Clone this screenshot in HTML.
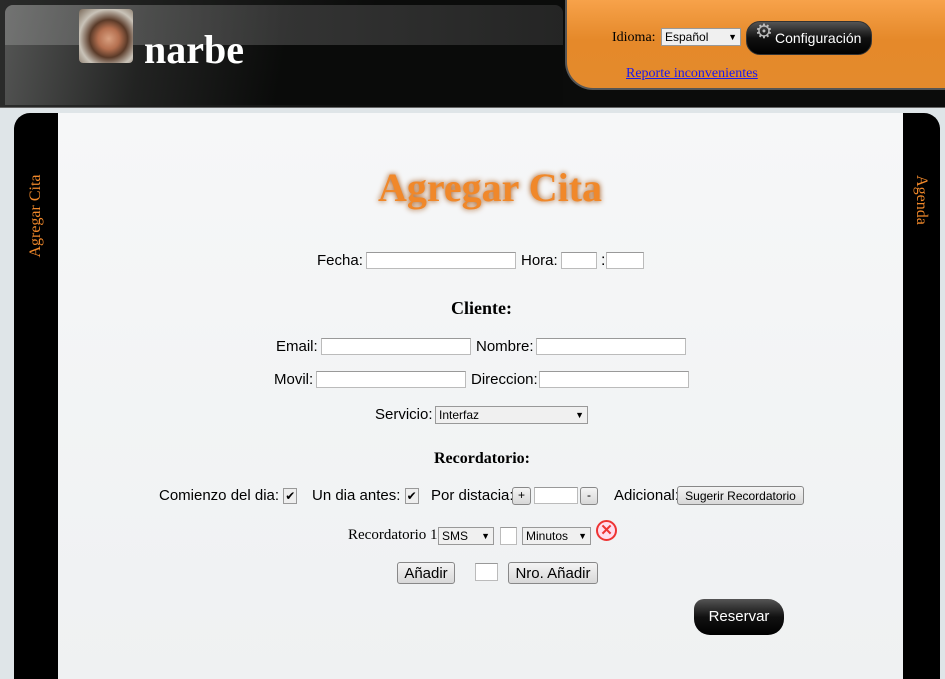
<!DOCTYPE html>
<html><head><meta charset="utf-8"><style>
*{box-sizing:border-box}
body{margin:0;width:945px;height:679px;overflow:hidden;background:#dfe5e8;font-family:"Liberation Sans",sans-serif;position:relative}
.a{position:absolute}
#hdr{left:0;top:0;width:945px;height:108px;background:linear-gradient(90deg,#2a2b2a,#0b0c0b 40%,#0b0c0b);border-bottom:1px solid #666}
#hl{left:5px;top:5px;width:558px;height:100px;border-radius:8px 8px 0 0;background:linear-gradient(100deg,#555655 0%,#222322 25%,#0a0b0a 50%);}
#hlband{left:5px;top:5px;width:558px;height:40px;border-radius:8px 8px 0 0;background:linear-gradient(90deg,#8a8b8a,#555 50%,#3a3a3a);opacity:.55}
#av{left:79px;top:9px;width:54px;height:54px;border-radius:4px;background:radial-gradient(circle at 55% 55%,#d8a080 0,#b57050 25%,#5a3a28 45%,#c9c3b8 70%,#7a6a5a)}
#nm{left:144px;top:26px;font:bold 40px "Liberation Serif",serif;color:#fff}
#or{left:565px;top:0;width:380px;height:90px;border-radius:0 0 0 28px;background:linear-gradient(#f7a24a,#e5892a 45%,#e48a2c);border:2px solid #555;border-top:none;border-right:none}
.sel{background:#f0f0f0;border:1px solid #999;font-size:12px;color:#000;padding:1px 3px;display:flex;justify-content:space-between;align-items:center}
.btn{background:linear-gradient(#f4f4f4,#d8d8d8);border:1px solid #888;border-radius:3px;font-size:13px;color:#000;text-align:center}
.inp{background:#fff;border:1px solid #bbb;border-top-color:#999}
#cont{left:58px;top:113px;width:845px;height:566px;background:linear-gradient(#f6f7f8,#eff1f2)}
.side{background:#000;color:#f0882a;font:16px "Liberation Serif",serif}
.l{font-size:15px;color:#000}
</style></head><body>
<div id="hdr" class="a"></div>
<div id="hl" class="a"></div>
<div id="hlband" class="a"></div>
<div id="av" class="a"></div>
<div id="nm" class="a">narbe</div>
<div id="or" class="a"></div>
<div class="a" style="left:612px;top:30px;font:14px 'Liberation Serif',serif">Idioma:</div>
<div class="a sel" style="left:661px;top:28px;width:80px;height:18px"><span>Español</span><span style="font-size:9px">▼</span></div>
<div class="a" style="left:746px;top:21px;width:126px;height:34px;border-radius:14px;background:linear-gradient(#555,#111 50%,#000);border:1px solid #333;color:#fff;font-size:14px;padding:8px 0 0 28px">Configuración</div>
<div class="a" style="left:755px;top:22px;color:#bbb;font-size:20px;line-height:20px">⚙</div>
<div class="a" style="left:626px;top:66px;font:14px 'Liberation Serif',serif;color:#1a1aee;text-decoration:underline">Reporte inconvenientes</div>

<div class="a side" style="left:14px;top:113px;width:44px;height:566px;border-radius:16px 0 0 0"></div>
<div class="a" style="left:14px;top:113px;width:44px;height:200px;"><div style="position:absolute;left:-58px;top:94px;width:160px;transform:rotate(-90deg);text-align:center;color:#f0882a;font:16px 'Liberation Serif',serif">Agregar Cita</div></div>
<div class="a side" style="left:903px;top:113px;width:37px;height:566px;border-radius:0 16px 0 0"></div>
<div class="a" style="left:903px;top:113px;width:37px;height:180px;"><div style="position:absolute;left:-62px;top:78px;width:160px;transform:rotate(90deg);text-align:center;color:#f0882a;font:16px 'Liberation Serif',serif">Agenda</div></div>
<div id="cont" class="a"></div>

<div class="a" style="left:378px;top:164px;font:bold 40px 'Liberation Serif',serif;color:#f0882a;text-shadow:0 0 6px #a05010">Agregar Cita</div>

<div class="a l" style="left:317px;top:252px">Fecha:</div>
<div class="a inp" style="left:366px;top:252px;width:150px;height:17px"></div>
<div class="a l" style="left:521px;top:252px">Hora:</div>
<div class="a inp" style="left:561px;top:252px;width:36px;height:17px"></div>
<div class="a" style="left:601px;top:252px">:</div>
<div class="a inp" style="left:606px;top:252px;width:38px;height:17px"></div>

<div class="a" style="left:451px;top:298px;font:bold 18px 'Liberation Serif',serif">Cliente:</div>
<div class="a l" style="left:276px;top:338px">Email:</div>
<div class="a inp" style="left:321px;top:338px;width:150px;height:17px"></div>
<div class="a l" style="left:476px;top:338px">Nombre:</div>
<div class="a inp" style="left:536px;top:338px;width:150px;height:17px"></div>
<div class="a l" style="left:274px;top:371px">Movil:</div>
<div class="a inp" style="left:316px;top:371px;width:150px;height:17px"></div>
<div class="a l" style="left:471px;top:371px">Direccion:</div>
<div class="a inp" style="left:539px;top:371px;width:150px;height:17px"></div>
<div class="a l" style="left:375px;top:406px">Servicio:</div>
<div class="a sel" style="left:435px;top:406px;width:153px;height:18px"><span>Interfaz</span><span style="font-size:9px">▼</span></div>

<div class="a" style="left:434px;top:450px;font:bold 16px 'Liberation Serif',serif">Recordatorio:</div>
<div class="a l" style="left:159px;top:487px">Comienzo del dia: <span style="font-size:12px;border:1px solid #999;background:#eee;padding:0 1px">✔</span></div>
<div class="a l" style="left:312px;top:487px">Un dia antes: <span style="font-size:12px;border:1px solid #999;background:#eee;padding:0 1px">✔</span></div>
<div class="a l" style="left:431px;top:487px">Por distacia:</div>
<div class="a btn" style="left:512px;top:487px;width:19px;height:18px;font-size:12px">+</div>
<div class="a inp" style="left:534px;top:487px;width:44px;height:17px"></div>
<div class="a btn" style="left:580px;top:487px;width:18px;height:18px;font-size:12px">-</div>
<div class="a l" style="left:614px;top:487px">Adicional:</div>
<div class="a btn" style="left:677px;top:486px;width:127px;height:19px;font-size:12px;padding-top:2px">Sugerir Recordatorio</div>

<div class="a" style="left:348px;top:527px;font:15px 'Liberation Serif',serif">Recordatorio 1</div>
<div class="a sel" style="left:438px;top:527px;width:56px;height:18px"><span>SMS</span><span style="font-size:9px">▼</span></div>
<div class="a inp" style="left:500px;top:527px;width:17px;height:18px"></div>
<div class="a sel" style="left:522px;top:527px;width:69px;height:18px"><span>Minutos</span><span style="font-size:9px">▼</span></div>
<div class="a" style="left:596px;top:520px;width:21px;height:21px;border-radius:50%;border:2px solid #e33;color:#e33;font:bold 15px/17px sans-serif;text-align:center;background:#fde">✕</div>

<div class="a btn" style="left:397px;top:562px;width:58px;height:22px;font-size:15px;padding-top:2px">Añadir</div>
<div class="a inp" style="left:475px;top:563px;width:23px;height:18px"></div>
<div class="a btn" style="left:508px;top:562px;width:90px;height:22px;font-size:15px;padding-top:2px">Nro. Añadir</div>
<div class="a" style="left:694px;top:599px;width:90px;height:36px;border-radius:10px 16px 16px 16px;background:linear-gradient(#555,#111 50%,#000);color:#fff;font-size:15px;text-align:center;padding-top:9px">Reservar</div>
</body></html>
